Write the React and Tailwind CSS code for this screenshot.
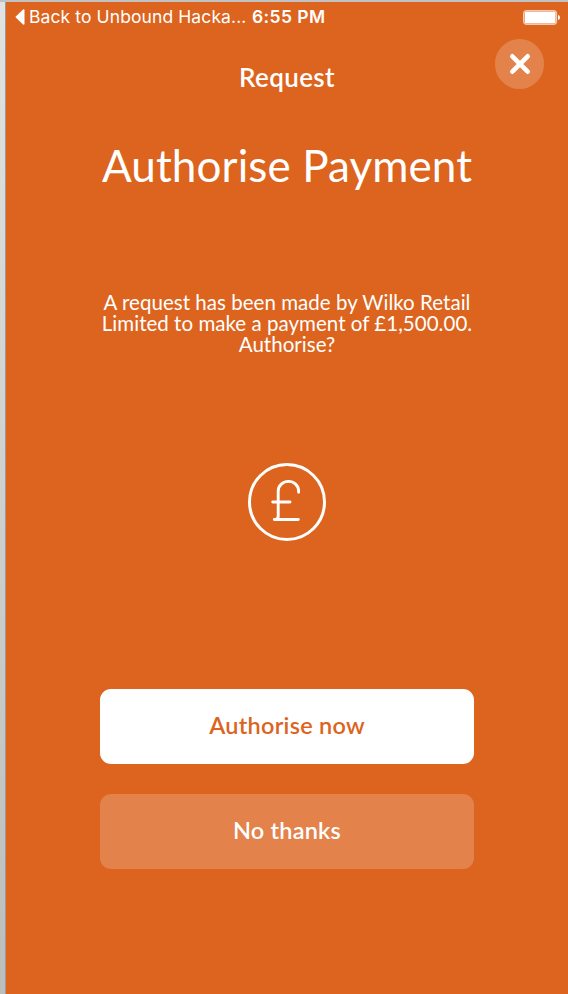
function StatusBar() {
  return (
    <div className="flex h-[30px] items-center justify-between pl-[9px] pr-[8px] font-[Inter,sans-serif] text-[17.5px] leading-[30px]">
      <div className="flex items-center whitespace-nowrap">
        <svg className="mr-[4px] block" width="10" height="16" viewBox="0 0 10 16" fill="#fff">
          <path d="M0.3 8 8 0.4Q9.5 0 9.5 1.2V14.8Q9.5 16 8 15.6Z" />
        </svg>
        <span className="w-[223px] tracking-[0.1px]">Back to Unbound Hacka...</span>
        <span className="font-semibold tracking-[0.4px]">6:55 PM</span>
      </div>
      <svg className="block" width="37" height="15" viewBox="0 0 37 15" fill="none">
        <rect x="0.6" y="0.6" width="33" height="13.8" rx="2.5" stroke="#fff" strokeOpacity="0.75" strokeWidth="1" />
        <rect x="1.6" y="1.6" width="31" height="11.8" rx="1" fill="#fff" />
        <path d="M35 5q2 .4 2 2.5t-2 2.5z" fill="#fff" />
      </svg>
    </div>
  );
}

function PoundIcon() {
  return (
    <svg className="mx-auto block" width="80" height="80" viewBox="0 0 80 80" fill="none" stroke="#fff" strokeLinecap="round">
      <circle cx="40" cy="40" r="37.5" strokeWidth="3" />
      <path d="M51.6 30.2V29C51.6 23.300 47 19.400 41.500 19.400S31.200 23.500 31.200 29V54Q31.200 57 28.500 57.500M27.300 57.500H51.300M25.700 40H43" strokeWidth="2.9" strokeLinejoin="round" />
    </svg>
  );
}

export default function App() {
  return (
    <div className="flex h-[994px] w-[568px] flex-col overflow-hidden bg-[#c1c1c1] pt-[2px]">
      <div className="flex flex-1">
        <div className="w-[6px] border-r border-[#a09a96] bg-linear-to-b from-[#e2e2e2] to-[#bdbdbd]" />
        <main className="flex-1 bg-[#dc641e] font-[Lato,sans-serif] text-white">
          <StatusBar />
          <header className="grid h-[72px] grid-cols-[1fr_auto_1fr] pr-[24px] pt-[7px]">
            <h1 className="col-start-2 pl-[24px] pt-[22px] text-[26px] font-semibold leading-[32px] tracking-[0.35px]">Request</h1>
            <button className="flex h-[50px] w-[49px] items-center justify-center justify-self-end rounded-full bg-[#e3824b]" aria-label="Close">
              <svg width="22" height="22" viewBox="0 0 22 22" stroke="#fff" strokeWidth="4.600" strokeLinecap="round">
                <path d="M3.300 3.300 18.700 18.700M18.700 3.300 3.300 18.700" />
              </svg>
            </button>
          </header>
          <section className="mx-auto flex w-[374px] flex-col text-center">
            <h2 className="mt-[33px] whitespace-nowrap text-[44px] leading-[56px] tracking-[0.1px]">Authorise Payment</h2>
            <p className="mt-[99px] whitespace-nowrap text-[20.5px] leading-[21px] tracking-[0.03px]">
              A request has been made by Wilko Retail
              <br />
              Limited to make a payment of £1,500.00.
              <br />
              Authorise?
            </p>
            <div className="mt-[107px]">
              <PoundIcon />
            </div>
            <button className="mt-[147px] h-[74.500px] rounded-[11px] bg-white pb-[1px] text-[23.5px] font-semibold tracking-[0.25px] text-[#dc641e]">Authorise now</button>
            <button className="mt-[30.500px] h-[74.500px] rounded-[11px] bg-[#e3824b] pb-[1px] text-[23.5px] font-semibold tracking-[0.2px]">No thanks</button>
          </section>
        </main>
      </div>
    </div>
  );
}
